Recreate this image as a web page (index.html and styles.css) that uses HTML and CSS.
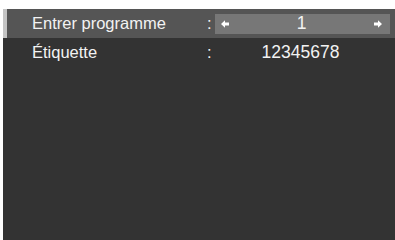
FILE: index.html
```html
<!DOCTYPE html>
<html>
<head>
<meta charset="utf-8">
<link rel="stylesheet" href="styles.css">
</head>
<body>
<div class="panel">
  <div class="row sel">
    <span class="label">Entrer programme</span>
    <span class="colon">:</span>
    <span class="value box">
      <svg class="arr" width="8" height="8" viewBox="0 0 8 8"><path d="M0 4 L4 0.3 L4 2.6 L8 2.6 L8 5.4 L4 5.4 L4 7.7 Z" fill="#fff"/></svg>
      <span class="num">1</span>
      <svg class="arr" width="8" height="8" viewBox="0 0 8 8"><path d="M8 4 L4 0.3 L4 2.6 L0 2.6 L0 5.4 L4 5.4 L4 7.7 Z" fill="#fff"/></svg>
    </span>
  </div>
  <div class="row">
    <span class="label">Étiquette</span>
    <span class="colon">:</span>
    <span class="value plain"><span class="num">12345678</span></span>
  </div>
</div>
</body>
</html>
```
FILE: styles.css
```css
html, body {
  margin: 0;
  padding: 0;
  background: #ffffff;
}
body {
  font-family: "Liberation Sans", Arial, sans-serif;
}
.panel {
  margin: 9px 0 0 3px;
  height: 231px;
  background: #333333;
}
.row {
  height: 29px;
  display: flex;
  align-items: center;
  color: #f2f2f2;
  border-left: 4px solid transparent;
  font-size: 16.5px;
}
.row.sel {
  background: #555555;
  border-left-color: #c4c4c4;
}
.label {
  width: 175px;
  padding-left: 25px;
  flex: none;
}
.colon {
  width: 8px;
  flex: none;
}
.value {
  width: 175px;
  height: 20px;
  display: flex;
  align-items: center;
  justify-content: center;
  flex: none;
  font-size: 17.5px;
  box-sizing: border-box;
}
.plain {
  padding-right: 4px;
}
.box {
  background: #777777;
  justify-content: space-between;
  padding: 0 8px 0 6px;
}
.arr {
  display: block;
}
```
